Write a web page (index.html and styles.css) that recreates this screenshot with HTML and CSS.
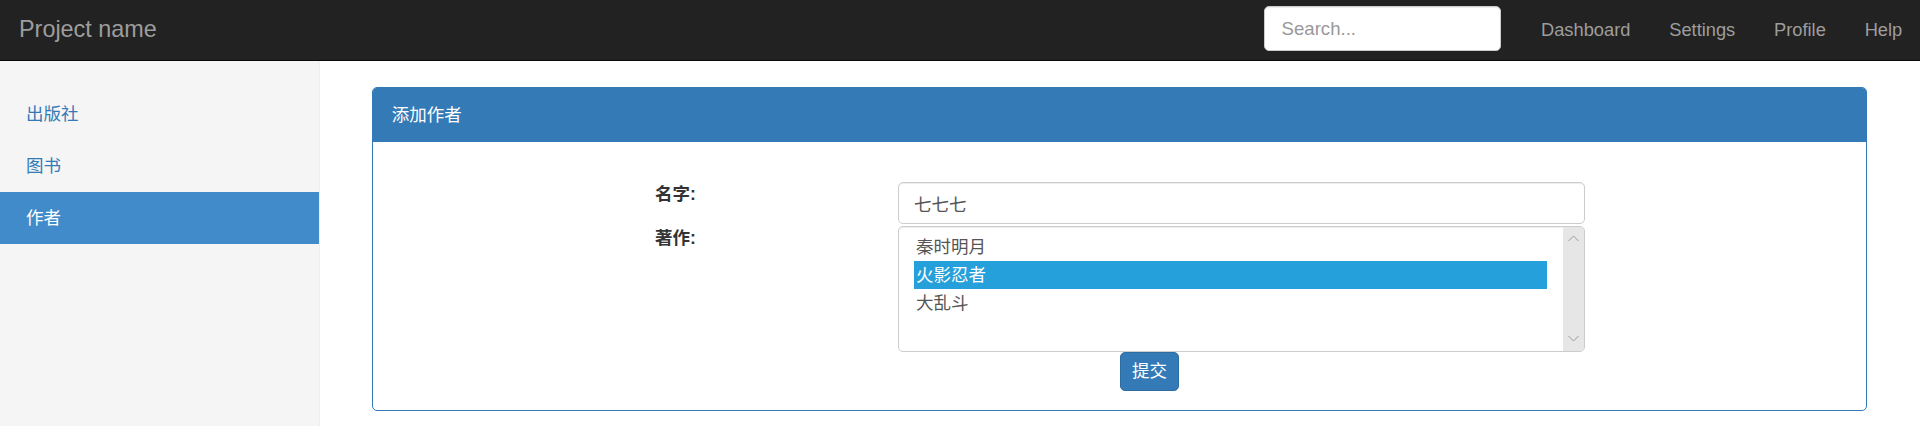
FILE: index.html
```html
<!DOCTYPE html>
<html lang="zh-CN">
<head>
<meta charset="utf-8">
<title>添加作者</title>
<link rel="stylesheet" href="styles.css">
</head>
<body>
<nav class="navbar">
  <a class="brand" href="#">Project name</a>
  <div class="nav-right">
    <input class="search" type="text" placeholder="Search...">
    <ul class="nav-links">
      <li><a href="#">Dashboard</a></li>
      <li><a href="#">Settings</a></li>
      <li><a href="#">Profile</a></li>
      <li><a href="#">Help</a></li>
    </ul>
  </div>
</nav>
<div class="layout">
  <aside class="sidebar">
    <ul class="side-nav">
      <li><a href="#">出版社</a></li>
      <li><a href="#">图书</a></li>
      <li class="active"><a href="#">作者</a></li>
    </ul>
  </aside>
  <main class="main">
    <section class="panel">
      <div class="panel-heading">添加作者</div>
      <div class="panel-body">
        <form class="form-grid">
          <label class="form-label">名字:</label>
          <input class="form-input" type="text" value="七七七">
          <label class="form-label">著作:</label>
          <div class="listbox" role="listbox" aria-multiselectable="true">
            <div class="options">
              <div class="option" role="option">秦时明月</div>
              <div class="option selected" role="option" aria-selected="true">火影忍者</div>
              <div class="option" role="option">大乱斗</div>
            </div>
            <div class="scrollbar">
              <svg class="arrow" width="11" height="7" viewBox="0 0 11 7"><path d="M0.5 6 L5.5 1 L10.5 6" fill="none" stroke="#9a9a9a" stroke-width="1"/></svg>
              <svg class="arrow" width="11" height="7" viewBox="0 0 11 7"><path d="M0.5 1 L5.5 6 L10.5 1" fill="none" stroke="#9a9a9a" stroke-width="1"/></svg>
            </div>
          </div>
        </form>
        <div class="actions">
          <button class="btn" type="button">提交</button>
        </div>
      </div>
    </section>
  </main>
</div>
</body>
</html>
```

FILE: styles.css
```css
* { box-sizing: border-box; }

html, body {
  margin: 0;
  padding: 0;
  background: #fff;
}

body {
  font-family: "Liberation Sans", Arial, "Noto Sans CJK SC", sans-serif;
  font-size: 17.5px;
  color: #333;
  line-height: 25px;
}

a { text-decoration: none; }

/* Navbar */
.navbar {
  height: 61px;
  background: #222;
  border-bottom: 1px solid #080808;
  display: flex;
  align-items: center;
}

.brand {
  color: #9d9d9d;
  font-size: 23.4px;
  padding-left: 19px;
  line-height: 30px;
  margin-top: -2px;
}

.nav-right {
  margin-left: auto;
  display: flex;
  align-items: center;
  height: 100%;
}

.search {
  width: 237px;
  height: 45px;
  margin-top: -3px;
  margin-right: 21px;
  border: 1px solid #ccc;
  border-radius: 5px;
  background: #fff;
  padding: 0 17px;
  font-family: "Liberation Sans", Arial, sans-serif;
  font-size: 18.6px;
  color: #555;
  box-shadow: inset 0 1px 1px rgba(0,0,0,.075);
}

.search::placeholder { color: #999; }

.nav-links {
  list-style: none;
  margin: 0 -1px 0 0;
  padding: 0;
  display: flex;
}

.nav-links a {
  display: block;
  padding: 0 19.4px;
  color: #9d9d9d;
  font-size: 18.3px;
  line-height: 25px;
  margin-top: -2px;
}

.nav-links li:last-child a { padding-right: 18.75px; }

/* Layout */
.layout {
  display: flex;
  min-height: 365px;
}

.sidebar {
  width: 320px;
  flex: none;
  background: #f5f5f5;
  border-right: 1px solid #eee;
  padding-top: 27px;
}

.side-nav {
  list-style: none;
  margin: 0;
  padding: 0;
}

.side-nav a {
  display: block;
  height: 52px;
  line-height: 52px;
  padding-left: 26px;
  color: #337ab7;
}

.side-nav .active a {
  background: #428bca;
  color: #fff;
}

.main {
  flex: 1;
  padding: 26px 53px 0 52px;
}

/* Panel */
.panel {
  border: 1px solid #337ab7;
  border-radius: 5px;
  overflow: hidden;
}

.panel-heading {
  height: 54px;
  background: #337ab7;
  color: #fff;
  padding: 0 18.75px;
  display: flex;
  align-items: center;
}

.panel-body {
  padding: 40px 0 19px 0;
}

.form-grid {
  display: grid;
  grid-template-columns: 243px 687px;
  row-gap: 2px;
  padding-left: 282px;
}

.form-label {
  font-weight: bold;
  color: #333;
  line-height: 25px;
}

.form-input {
  height: 42px;
  border: 1px solid #ccc;
  border-radius: 5px;
  padding: 0 15px;
  font-family: "Liberation Sans", Arial, "Noto Sans CJK SC", sans-serif;
  font-size: 17.5px;
  color: #555;
  box-shadow: inset 0 1px 1px rgba(0,0,0,.075);
}

.listbox {
  height: 126px;
  border: 1px solid #ccc;
  border-radius: 5px;
  display: flex;
  overflow: hidden;
  box-shadow: inset 0 1px 1px rgba(0,0,0,.075);
  background: #fff;
}

.options {
  flex: 1;
  padding: 6px 16px 0 15px;
}

.option {
  height: 28px;
  line-height: 28px;
  padding-left: 2px;
  color: #555;
}

.option.selected {
  background: #26a0da;
  color: #fff;
}

.scrollbar {
  width: 21px;
  flex: none;
  background: #e6e6e6;
  display: flex;
  flex-direction: column;
  justify-content: space-between;
  align-items: center;
  padding: 8px 0 9px;
}

.arrow { display: block; }

.actions {
  padding-left: 747px;
}

.btn {
  height: 39px;
  width: 59px;
  padding: 0;
  border: 1px solid #2e6da4;
  border-radius: 5px;
  background: #337ab7;
  color: #fff;
  font-family: "Liberation Sans", Arial, "Noto Sans CJK SC", sans-serif;
  font-size: 17.5px;
  line-height: 37px;
}
```
